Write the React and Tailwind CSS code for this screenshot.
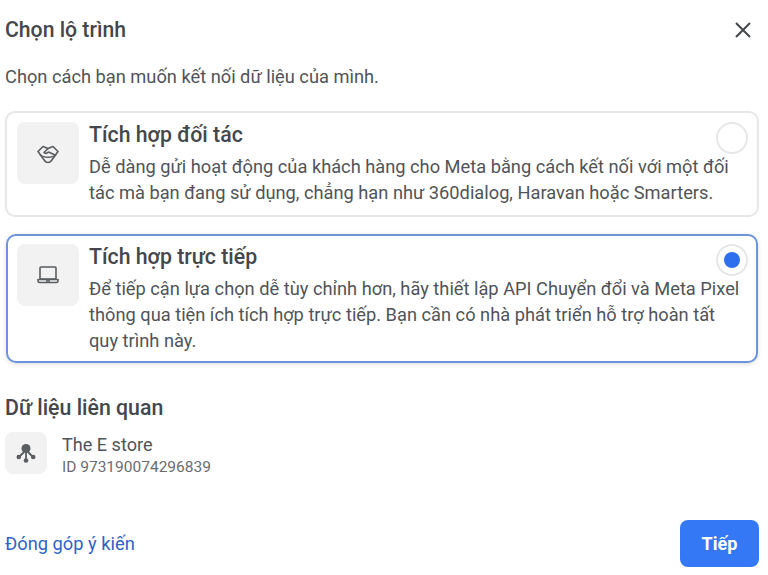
import React from "react";

const Radio = ({ on }) => (
  <div className="w-8 h-8 shrink-0 rounded-full border-2 border-[#e4e6e8] bg-white flex items-center justify-center">
    {on && <div className="w-[16px] h-[16px] rounded-full bg-[#2f6fed]" />}
  </div>
);

const Handshake = () => (
  <svg className="mt-[2px]" width="22" height="20" viewBox="0 0 22 20" fill="none" stroke="#5a5d61" strokeWidth="1.6" strokeLinejoin="round" strokeLinecap="round">
    <path d="M1 7.5 6 2.5 11 4.5l5-2 5 5-2.5 3.5-4 5.5a4 4 0 0 1-7 0l-4-5.5z" />
    <path d="M11 4.5 7 8.5c1.5 1.5 3 1 4.5-.5l6.5 3" />
    <path d="M3.5 11c3 3 12 3 15 0" />
  </svg>
);

const Laptop = () => (
  <svg width="22" height="18" viewBox="0 0 22 18" fill="none" stroke="#5a5d61" strokeWidth="1.6" strokeLinejoin="round">
    <rect x="3" y="1" width="16" height="12" rx="1" />
    <path d="M1 13.5h20v1.5a1.5 1.5 0 0 1-1.5 1.5h-17A1.5 1.5 0 0 1 1 15z" />
    <path d="M9 15h4" />
  </svg>
);

const Nodes = () => (
  <svg width="22" height="22" viewBox="0 0 22 22" fill="#5a5d61" stroke="none">
    <circle cx="11" cy="6.5" r="4.5" />
    <path d="M9 10 4.5 14.5M13 10l4.5 4.5M11 10v8" stroke="#5a5d61" strokeWidth="1.8" fill="none" />
    <circle cx="3.8" cy="15" r="2.3" />
    <circle cx="18.2" cy="15" r="2.3" />
    <circle cx="11" cy="18.5" r="2.3" />
  </svg>
);

const IconBox = ({ children }) => (
  <div className="w-[62px] h-[62px] shrink-0 rounded-lg bg-[#f2f2f3] flex items-center justify-center">{children}</div>
);

export default function App() {
  return (
    <div
      className="w-[768px] h-[575px] bg-white overflow-hidden flex flex-col pl-[5px] pr-[9px] text-[#505459]"
      style={{ fontFamily: "Roboto, 'Noto Sans', sans-serif" }}
    >
      <div className="flex items-center justify-between h-[24px] mt-[18px]">
        <h1 className="text-[21.2px] leading-[24px] font-medium text-[#44474b]">Chọn lộ trình</h1>
        <svg className="mr-[7px]" width="18" height="18" viewBox="0 0 18 18" stroke="#44474b" strokeWidth="2" fill="none">
          <path d="M2 2l14 14M16 2 2 16" />
        </svg>
      </div>
      <p className="mt-[23px] text-[18.25px] leading-[24px]">Chọn cách bạn muốn kết nối dữ liệu của mình.</p>

      <div className="mt-[22px] h-[106px] border-2 border-[#e6e7e9] rounded-[10px] pl-[10px] pr-[9px] pt-[9px] flex gap-[10px]">
        <IconBox><Handshake /></IconBox>
        <div className="flex-1 min-w-0">
          <div className="mt-[1px] text-[21.3px] leading-[24px] font-medium text-[#44474b]">Tích hợp đối tác</div>
          <p className="mt-[7px] text-[18.25px] leading-[26px] whitespace-nowrap">
            Dễ dàng gửi hoạt động của khách hàng cho Meta bằng cách kết nối với một đối<br />
            tác mà bạn đang sử dụng, chẳng hạn như 360dialog, Haravan hoặc Smarters.
          </p>
        </div>
        <div className="w-0 flex justify-end"><Radio /></div>
      </div>

      <div className="mt-[17px] mx-[1px] h-[129px] border-2 border-[#6c93dc] rounded-[10px] pl-[9px] pr-[8px] pt-[8px] flex gap-[10px] shadow-[0_1px_4px_rgba(0,0,0,0.15)]">
        <IconBox><Laptop /></IconBox>
        <div className="flex-1 min-w-0">
          <div className="mt-[1px] text-[21.3px] leading-[24px] font-medium text-[#44474b]">Tích hợp trực tiếp</div>
          <p className="mt-[7px] text-[18.25px] leading-[26px] whitespace-nowrap">
            Để tiếp cận lựa chọn dễ tùy chỉnh hơn, hãy thiết lập API Chuyển đổi và Meta Pixel<br />
            thông qua tiện ích tích hợp trực tiếp. Bạn cần có nhà phát triển hỗ trợ hoàn tất<br />
            quy trình này.
          </p>
        </div>
        <div className="w-0 flex justify-end"><Radio on /></div>
      </div>

      <h2 className="mt-[33px] text-[21.3px] leading-[24px] font-medium text-[#44474b]">Dữ liệu liên quan</h2>
      <div className="mt-[12px] flex items-start gap-[15px]">
        <div className="w-[42px] h-[42px] shrink-0 rounded-lg bg-[#f2f2f3] flex items-center justify-center"><Nodes /></div>
        <div>
          <div className="text-[18.1px] leading-[22px] mt-[2px]">The E store</div>
          <div className="text-[15.5px] leading-[20px] text-[#696d72] mt-[1px]">ID 973190074296839</div>
        </div>
      </div>

      <div className="mt-auto mb-[8px] flex items-center justify-between">
        <a className="text-[18.3px] text-[#2f63c6]">Đóng góp ý kiến</a>
        <button className="w-[79px] h-[47px] rounded-lg bg-[#3478f6] text-white text-[18px] font-bold">Tiếp</button>
      </div>
    </div>
  );
}
